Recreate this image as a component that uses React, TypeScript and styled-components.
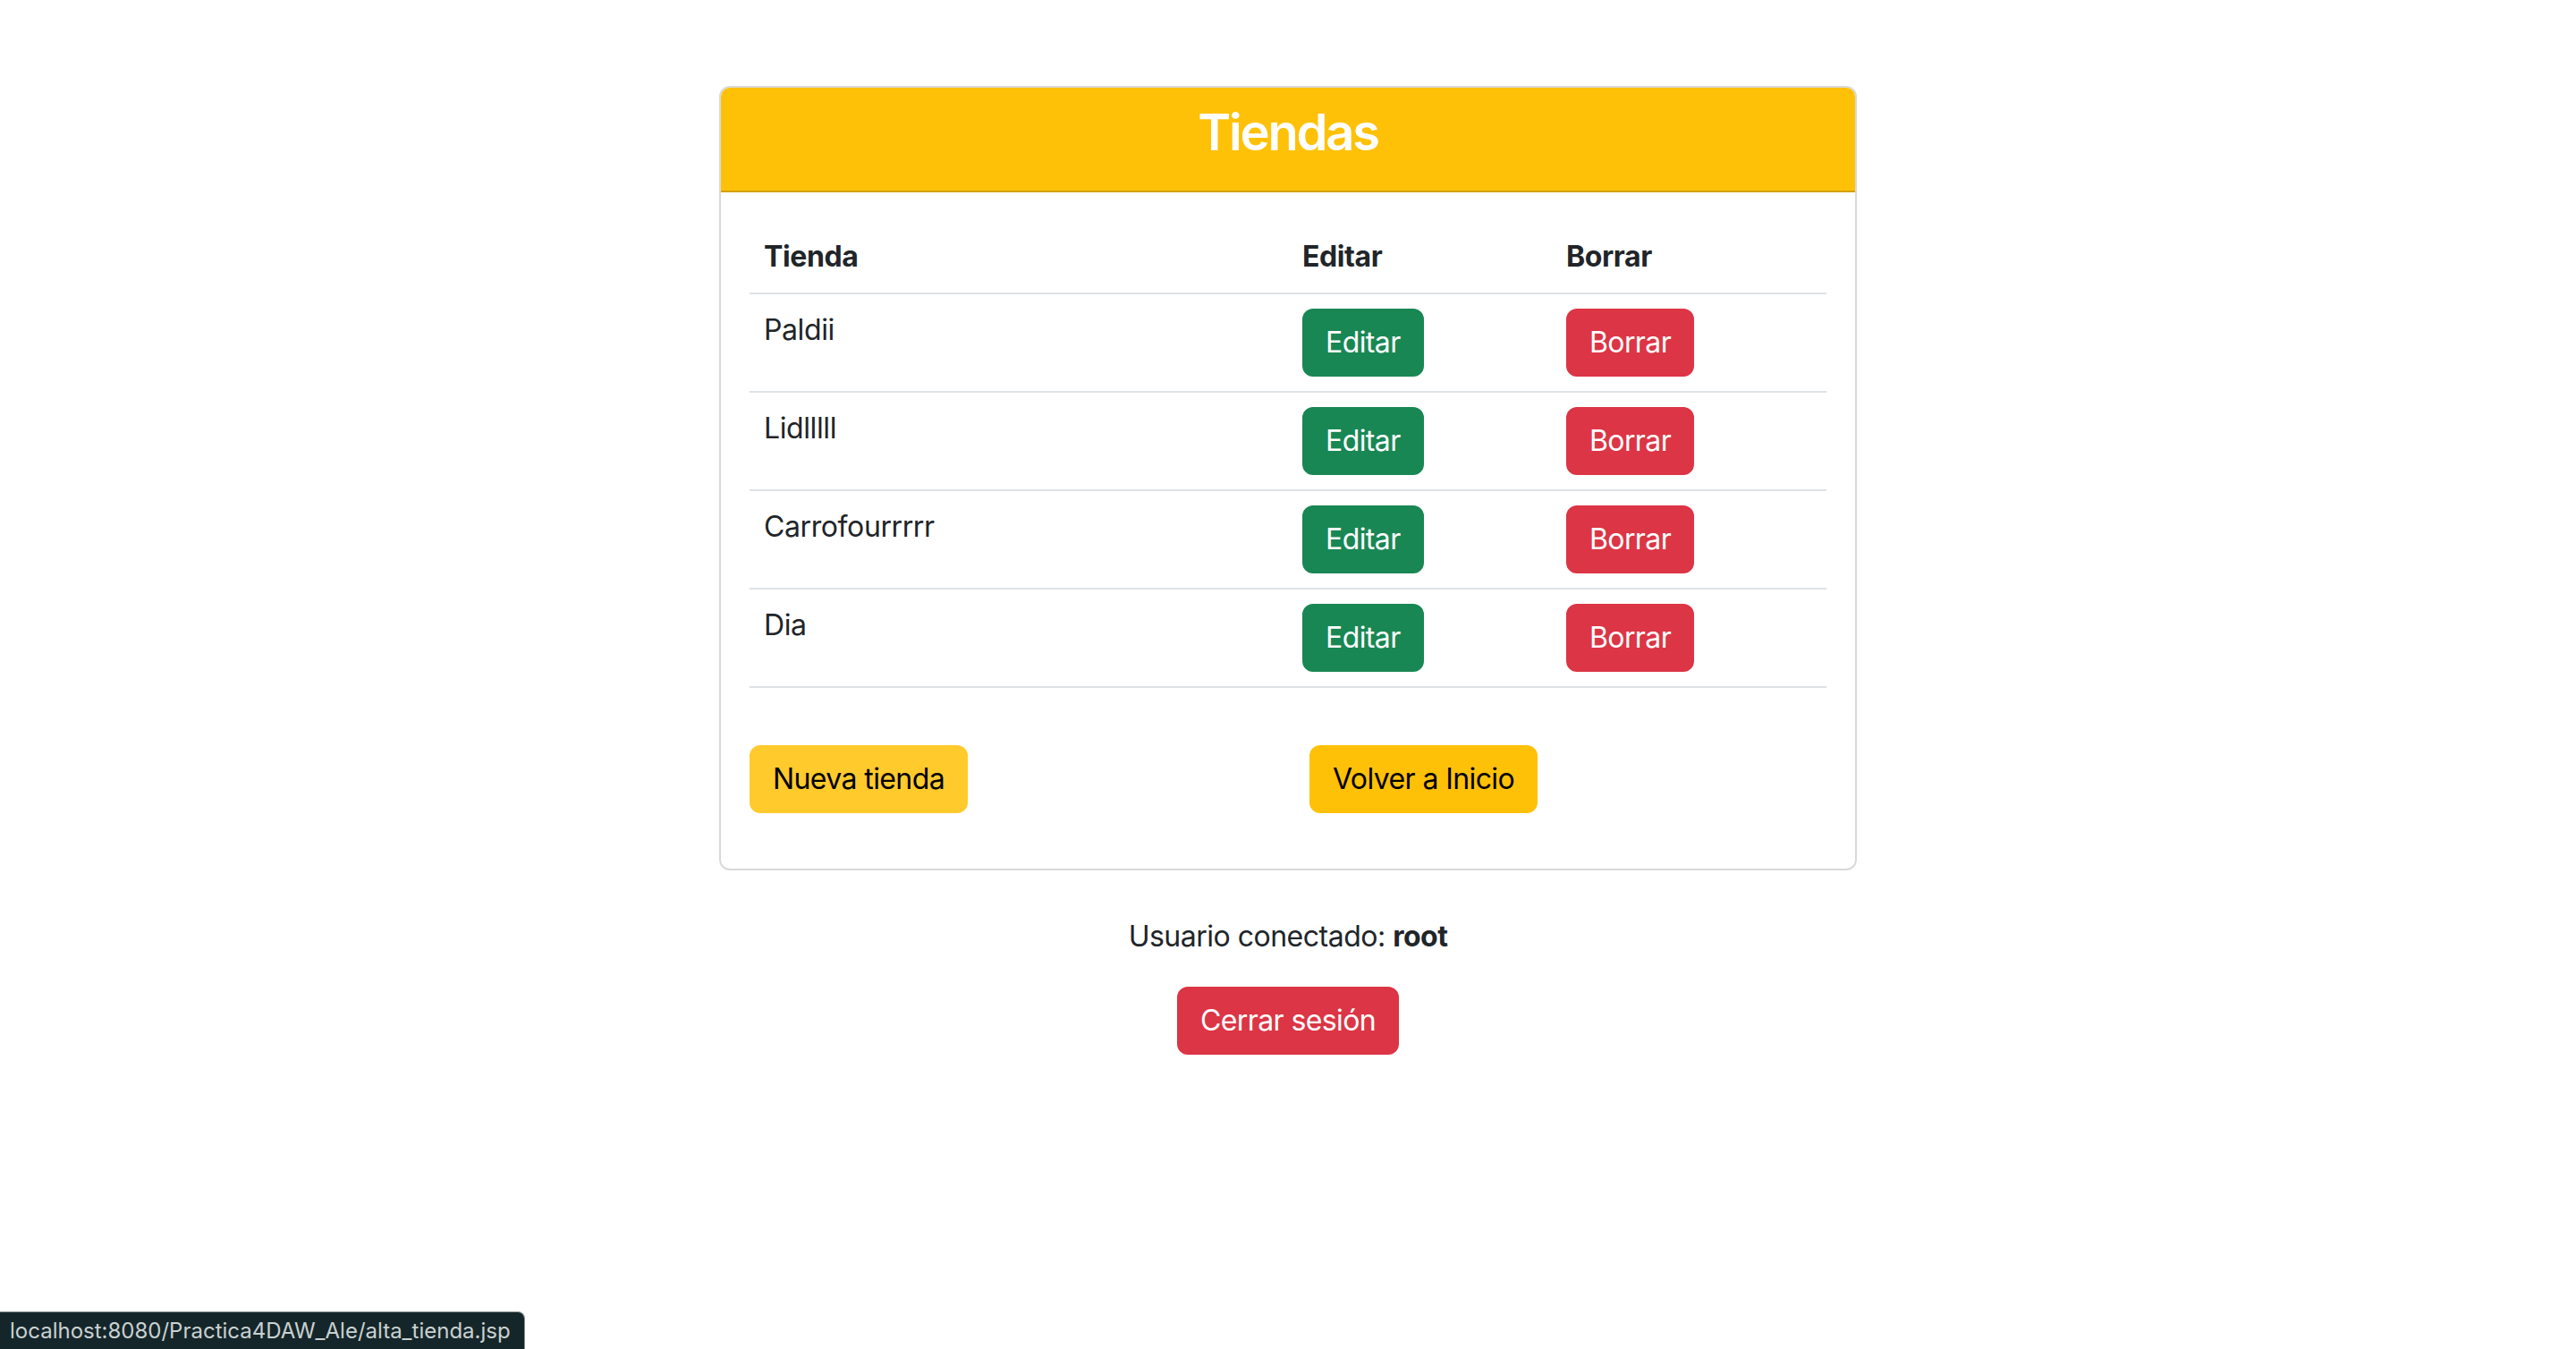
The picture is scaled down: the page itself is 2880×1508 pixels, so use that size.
import React from "react";
import styled, { createGlobalStyle } from "styled-components";

const GlobalStyle = createGlobalStyle`
  html, body { margin: 0; padding: 0; background: #ffffff; }
  body {
    font-family: Inter, "Noto Sans", "Liberation Sans", sans-serif;
    color: #212529;
    font-size: 32px;
    line-height: 48px;
  }
  * { box-sizing: border-box; }
`;

const Page = styled.main`
  display: flex;
  flex-direction: column;
  align-items: center;
  padding-top: 96px;
`;

const Card = styled.section`
  width: 1272px;
  border: 2px solid #d9d9d9;
  border-radius: 12px;
  overflow: hidden;
  background: #fff;
`;

const CardHeader = styled.header`
  background: #ffc107;
  border-bottom: 2px solid #d4a106;
  padding: 17px 32px 16px;
  text-align: center;
`;

const Title = styled.h3`
  margin: 0 0 16px;
  font-size: 56px;
  line-height: 66px;
  font-weight: 600;
  letter-spacing: -2.2px;
  color: #ffffff;
`;

const CardBody = styled.div`
  padding: 32px 32px 32px;
`;

const Table = styled.div`
  display: flex;
  flex-direction: column;
  margin-bottom: 64px;
`;

const Row = styled.div`
  display: grid;
  grid-template-columns: 602px 295px 1fr;
  border-bottom: 2px solid #dee2e6;
`;

const Cell = styled.div<{ $head?: boolean }>`
  padding: 16px;
  line-height: 48px;
  font-weight: ${(p) => (p.$head ? 700 : 400)};
  letter-spacing: -0.4px;
`;

const Button = styled.button<{ $bg: string; $fg: string }>`
  display: inline-block;
  font-family: inherit;
  font-size: 32px;
  line-height: 48px;
  font-weight: 400;
  letter-spacing: -0.6px;
  padding: 12px 24px;
  border: 2px solid ${(p) => p.$bg};
  border-radius: 12px;
  background: ${(p) => p.$bg};
  color: ${(p) => p.$fg};
  cursor: pointer;
`;

const Actions = styled.div`
  display: grid;
  grid-template-columns: 1fr 1fr;
  column-gap: 48px;
  margin-bottom: 30px;
  justify-items: start;
`;

const UserLine = styled.p`
  margin: 50px 0 32px;
  text-align: center;
  letter-spacing: -0.5px;
`;

const Strong = styled.strong`
  font-weight: 700;
`;

const StatusBubble = styled.div`
  position: fixed;
  left: 0;
  bottom: 0;
  height: 42px;
  padding: 3px 15px 0 11px;
  background: #15262a;
  color: #c9d1d1;
  font-size: 24px;
  line-height: 36px;
  letter-spacing: 0;
  border-top-right-radius: 8px;
  border-top: 1px solid #8a9496;
  border-right: 1px solid #8a9496;
`;

const tiendas = ["Paldii", "Lidlllll", "Carrofourrrrr", "Dia"];

export default function App() {
  return (
    <>
      <GlobalStyle />
      <Page>
        <Card>
          <CardHeader>
            <Title>Tiendas</Title>
          </CardHeader>
          <CardBody>
            <Table>
              <Row>
                <Cell $head>Tienda</Cell>
                <Cell $head>Editar</Cell>
                <Cell $head>Borrar</Cell>
              </Row>
              {tiendas.map((t) => (
                <Row key={t}>
                  <Cell>{t}</Cell>
                  <Cell>
                    <Button $bg="#198754" $fg="#ffffff">Editar</Button>
                  </Cell>
                  <Cell>
                    <Button $bg="#dc3545" $fg="#ffffff">Borrar</Button>
                  </Cell>
                </Row>
              ))}
            </Table>
            <Actions>
              <Button $bg="#ffca2c" $fg="#000000">Nueva tienda</Button>
              <Button $bg="#ffc107" $fg="#000000">Volver a Inicio</Button>
            </Actions>
          </CardBody>
        </Card>
        <UserLine>
          Usuario conectado: <Strong>root</Strong>
        </UserLine>
        <Button $bg="#dc3545" $fg="#ffffff">Cerrar sesión</Button>
      </Page>
      <StatusBubble>localhost:8080/Practica4DAW_Ale/alta_tienda.jsp</StatusBubble>
    </>
  );
}
